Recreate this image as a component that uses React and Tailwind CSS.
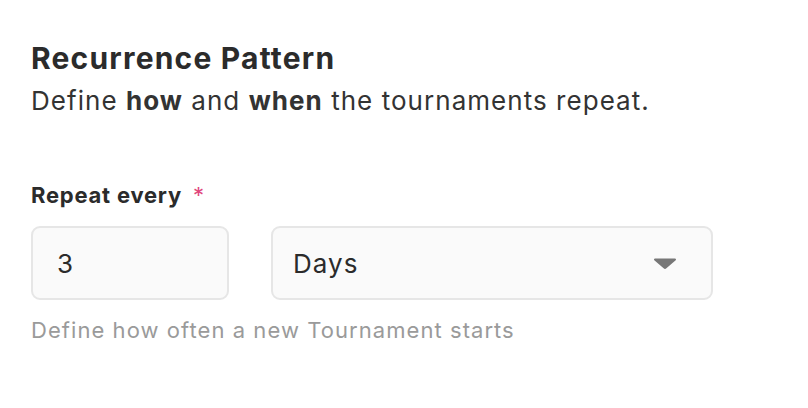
export default function App() {
  return (
    <div className="min-h-screen bg-white pl-[31px] pt-[40px] font-['Inter','Liberation_Sans',sans-serif] text-[#2b2b2b]">
      {/* Heading */}
      <h2 className="text-[30px] font-bold leading-[36px] tracking-[0.04em]">Recurrence Pattern</h2>
      <p className="mt-[8px] text-[26px] leading-[34px] tracking-[0.04em] text-[#333]">
        Define <span className="font-bold">how</span> and <span className="font-bold">when</span> the tournaments repeat.
      </p>

      {/* Repeat every */}
      <div className="mt-[62px]">
        <label className="flex items-center text-[22px] font-bold leading-[30px] tracking-[0.035em]">
          Repeat every
          <span className="ml-[11px] font-normal text-[#e0457b]">*</span>
        </label>
        <div className="mt-[16px] flex gap-[42px]">
          <div className="flex h-[74px] w-[198px] items-center rounded-[9px] border-2 border-[#e6e6e6] bg-[#fafafa] px-[24px] text-[26px] tracking-[0.04em]">
            3
          </div>
          <div className="flex h-[74px] w-[442px] items-center justify-between rounded-[9px] border-2 border-[#e6e6e6] bg-[#fafafa] pl-[20px] pr-[34px] text-[26px] tracking-[0.04em]">
            <span>Days</span>
            <svg width="24" height="12" viewBox="0 0 24 12">
              <path d="M2 1.5h20a1 1 0 0 1 .7 1.7l-9.3 8a2 2 0 0 1-2.8 0l-9.3-8A1 1 0 0 1 2 1.5z" fill="#777" />
            </svg>
          </div>
        </div>
        <p className="mt-[15px] text-[22px] leading-[30px] tracking-[0.048em] text-[#9a9a9a]">Define how often a new Tournament starts</p>
      </div>
    </div>
  );
}
